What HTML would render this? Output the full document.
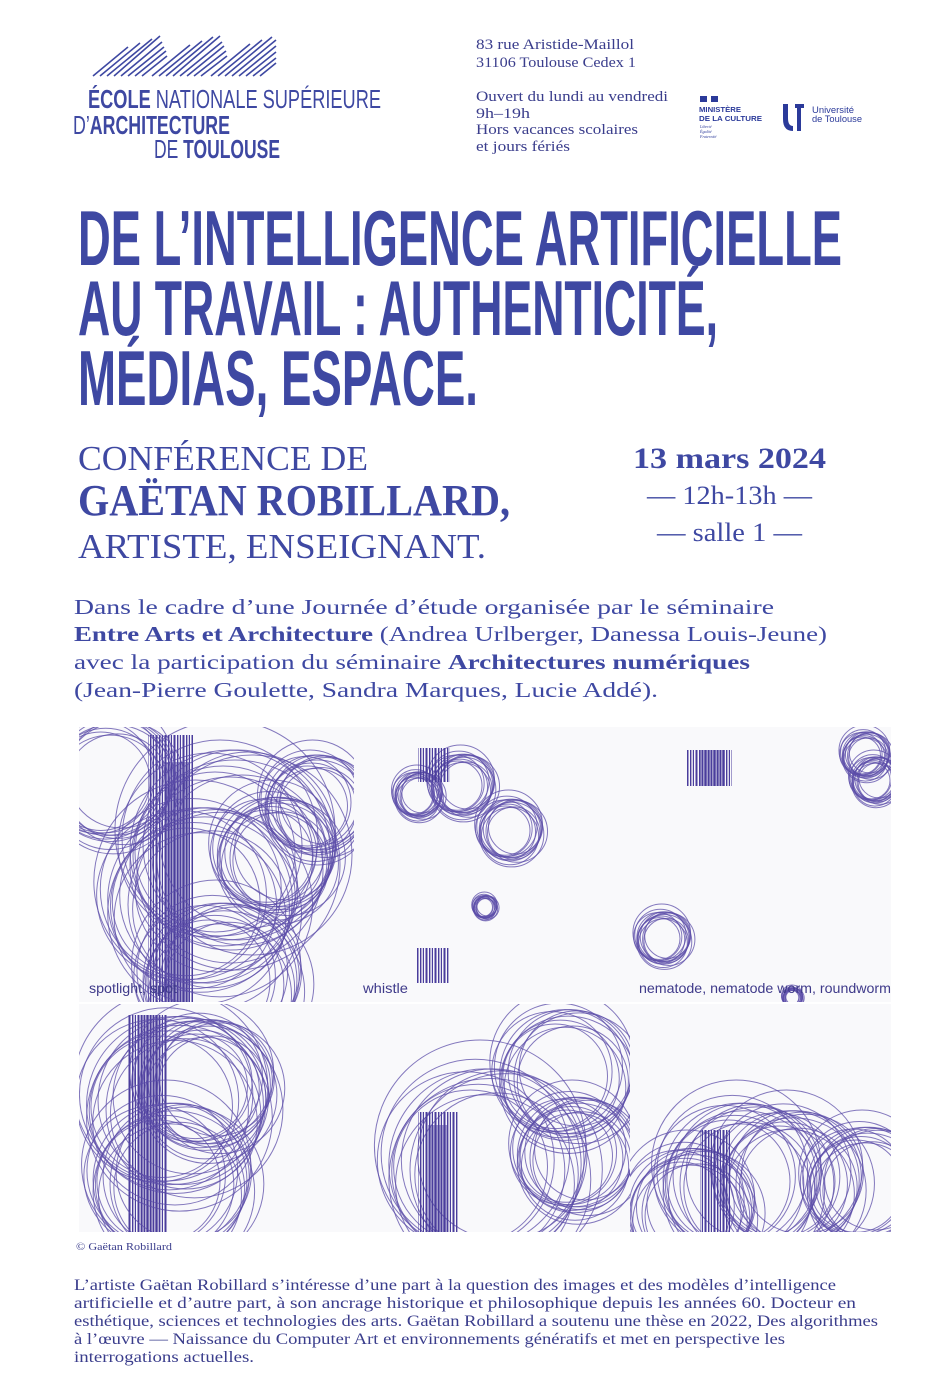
<!DOCTYPE html>
<html><head><meta charset="utf-8"><style>
html,body{margin:0;padding:0;background:#fff;}
svg{display:block}
.t{font-family:"Liberation Sans Narrow","Liberation Sans",sans-serif;font-weight:bold;fill:#3e48a2}
.s{font-family:"Liberation Serif",serif;fill:#3e48a2}
.b{font-family:"Liberation Serif",serif;fill:#3a3d8c}
.l{font-family:"Liberation Sans Narrow","Liberation Sans",sans-serif;fill:#3e48a2}
</style></head><body>
<svg width="933" height="1400" viewBox="0 0 933 1400" xmlns="http://www.w3.org/2000/svg">
<defs>
<symbol id="c" viewBox="-1.3 -1.3 2.6 2.6" overflow="visible">
<g fill="none" stroke="#5b4ca8" stroke-width="1" vector-effect="non-scaling-stroke" stroke-opacity=".75">
<circle cx="0" cy="0" r="1" vector-effect="non-scaling-stroke"/>
<circle cx=".08" cy="-.05" r=".95" vector-effect="non-scaling-stroke"/>
<circle cx="-.07" cy=".06" r=".9" vector-effect="non-scaling-stroke"/>
<circle cx=".12" cy=".1" r=".85" vector-effect="non-scaling-stroke"/>
<circle cx="-.1" cy="-.12" r=".98" vector-effect="non-scaling-stroke"/>
<circle cx=".05" cy=".15" r="1.05" vector-effect="non-scaling-stroke"/>
<circle cx="-.15" cy=".02" r=".8" vector-effect="non-scaling-stroke"/>
<circle cx=".18" cy="-.1" r=".88" vector-effect="non-scaling-stroke"/>
<circle cx="0" cy=".2" r=".93" vector-effect="non-scaling-stroke"/>
<circle cx="-.05" cy="-.2" r="1.1" vector-effect="non-scaling-stroke"/>
<circle cx=".22" cy=".05" r="1" vector-effect="non-scaling-stroke"/>
<circle cx="-.2" cy="-.05" r=".92" vector-effect="non-scaling-stroke"/>
</g>
</symbol>
<pattern id="bar" width="9" height="10" patternUnits="userSpaceOnUse">
<rect x="0" width="1" height="10" fill="#4a3d9c"/><rect x="2.5" width="2" height="10" fill="#4a3d9c"/><rect x="6" width="1" height="10" fill="#4a3d9c"/><rect x="7.6" width=".6" height="10" fill="#4a3d9c"/>
</pattern>
<clipPath id="img"><rect x="79" y="727" width="812" height="505"/></clipPath>
</defs>

<!-- logo hatch -->
<g stroke="#3e48a2" stroke-width="1.6">
<line x1="93" y1="76" x2="128" y2="47"/><line x1="100" y1="76" x2="140" y2="43"/><line x1="107" y1="76" x2="152" y2="39"/><line x1="114" y1="76" x2="160" y2="36"/><line x1="121" y1="76" x2="162" y2="42"/><line x1="128" y1="76" x2="164" y2="47"/><line x1="135" y1="76" x2="166" y2="51"/><line x1="142" y1="76" x2="167" y2="56"/>
<line x1="152" y1="76" x2="190" y2="45"/><line x1="159" y1="76" x2="202" y2="41"/><line x1="166" y1="76" x2="213" y2="37"/><line x1="173" y1="76" x2="220" y2="36"/><line x1="180" y1="76" x2="222" y2="42"/><line x1="187" y1="76" x2="224" y2="46"/><line x1="194" y1="76" x2="226" y2="51"/><line x1="201" y1="76" x2="227" y2="56"/>
<line x1="211" y1="76" x2="250" y2="44"/><line x1="218" y1="76" x2="262" y2="40"/><line x1="225" y1="76" x2="272" y2="37"/><line x1="232" y1="76" x2="276" y2="40"/><line x1="239" y1="76" x2="276" y2="46"/><line x1="246" y1="76" x2="276" y2="52"/><line x1="253" y1="76" x2="276" y2="58"/><line x1="260" y1="76" x2="276" y2="63"/>
</g>
<text class="l" x="88" y="108" font-size="26" textLength="293" lengthAdjust="spacingAndGlyphs"><tspan font-weight="bold">ÉCOLE</tspan> NATIONALE SUPÉRIEURE</text>
<text class="l" x="73" y="134" font-size="26" textLength="157" lengthAdjust="spacingAndGlyphs">D’<tspan font-weight="bold">ARCHITECTURE</tspan></text>
<text class="l" x="154" y="158" font-size="26" textLength="126" lengthAdjust="spacingAndGlyphs">DE <tspan font-weight="bold">TOULOUSE</tspan></text>

<!-- address -->
<g class="s" font-size="15" style="fill:#3a3d8c">
<text x="476" y="49" textLength="158" lengthAdjust="spacingAndGlyphs">83 rue Aristide-Maillol</text>
<text x="476" y="67" textLength="160" lengthAdjust="spacingAndGlyphs">31106 Toulouse Cedex 1</text>
<text x="476" y="101" textLength="192" lengthAdjust="spacingAndGlyphs">Ouvert du lundi au vendredi</text>
<text x="476" y="118" textLength="54" lengthAdjust="spacingAndGlyphs">9h–19h</text>
<text x="476" y="134" textLength="162" lengthAdjust="spacingAndGlyphs">Hors vacances scolaires</text>
<text x="476" y="151" textLength="94" lengthAdjust="spacingAndGlyphs">et jours fériés</text>
</g>
<!-- ministère -->
<rect x="700" y="96" width="7" height="6" fill="#2b3a9a"/><rect x="711" y="96" width="7" height="6" fill="#2b3a9a"/>
<text x="699" y="112" font-family="Liberation Sans" font-weight="bold" font-size="7.5" fill="#2b3a9a" textLength="42" lengthAdjust="spacingAndGlyphs">MINISTÈRE</text>
<text x="699" y="121" font-family="Liberation Sans" font-weight="bold" font-size="7.5" fill="#2b3a9a" textLength="63" lengthAdjust="spacingAndGlyphs">DE LA CULTURE</text>
<text x="700" y="128" font-family="Liberation Serif" font-style="italic" font-size="4" fill="#2b3a9a">Liberté</text>
<text x="700" y="133" font-family="Liberation Serif" font-style="italic" font-size="4" fill="#2b3a9a">Égalité</text>
<text x="700" y="138" font-family="Liberation Serif" font-style="italic" font-size="4" fill="#2b3a9a">Fraternité</text>
<!-- université -->
<path d="M783 104 h5 v14 q0 8 5 8 v5 q-10 0 -10 -12z" fill="#2b3a9a"/>
<path d="M795 104 h9 v4 h-3 v23 h-4 v-23 h-2z" fill="#2b3a9a"/>
<text x="812" y="113" font-family="Liberation Sans" font-size="9" fill="#2b3a9a" textLength="42" lengthAdjust="spacingAndGlyphs">Université</text>
<text x="812" y="122" font-family="Liberation Sans" font-size="9" fill="#2b3a9a" textLength="50" lengthAdjust="spacingAndGlyphs">de Toulouse</text>

<!-- title -->
<text class="t" x="78" y="265" font-size="78" textLength="764" lengthAdjust="spacingAndGlyphs">DE L’INTELLIGENCE ARTIFICIELLE</text>
<text class="t" x="78" y="335" font-size="78" textLength="640" lengthAdjust="spacingAndGlyphs">AU TRAVAIL : AUTHENTICITÉ,</text>
<text class="t" x="78" y="405" font-size="78" textLength="400" lengthAdjust="spacingAndGlyphs">MÉDIAS, ESPACE.</text>

<!-- subtitle -->
<text class="s" x="78" y="470" font-size="35" textLength="290" lengthAdjust="spacingAndGlyphs">CONFÉRENCE DE</text>
<text class="s" x="78" y="515" font-size="44" font-weight="bold" textLength="432" lengthAdjust="spacingAndGlyphs">GAËTAN ROBILLARD,</text>
<text class="s" x="78" y="558" font-size="35" textLength="408" lengthAdjust="spacingAndGlyphs">ARTISTE, ENSEIGNANT.</text>
<text class="s" x="633" y="468" font-size="30" font-weight="bold" textLength="193" lengthAdjust="spacingAndGlyphs">13 mars 2024</text>
<text class="s" x="647" y="504" font-size="26" textLength="165" lengthAdjust="spacingAndGlyphs">— 12h-13h —</text>
<text class="s" x="657" y="541" font-size="26" textLength="145" lengthAdjust="spacingAndGlyphs">— salle 1 —</text>

<!-- paragraph -->
<g class="s" font-size="21">
<text x="74" y="614" textLength="700" lengthAdjust="spacingAndGlyphs">Dans le cadre d’une Journée d’étude organisée par le séminaire</text>
<text x="74" y="641" textLength="753" lengthAdjust="spacingAndGlyphs"><tspan font-weight="bold">Entre Arts et Architecture</tspan> (Andrea Urlberger, Danessa Louis-Jeune)</text>
<text x="74" y="669" textLength="676" lengthAdjust="spacingAndGlyphs">avec la participation du séminaire <tspan font-weight="bold">Architectures numériques</tspan></text>
<text x="74" y="697" textLength="584" lengthAdjust="spacingAndGlyphs">(Jean-Pierre Goulette, Sandra Marques, Lucie Addé).</text>
</g>

<!-- image -->
<rect x="79" y="727" width="812" height="505" fill="#f9f9fb"/>
<g clip-path="url(#img)">
<clipPath id="p1"><rect x="79" y="727" width="275" height="275"/></clipPath>
<clipPath id="p2"><rect x="354" y="727" width="276" height="275"/></clipPath>
<clipPath id="p3"><rect x="630" y="727" width="261" height="275"/></clipPath>
<clipPath id="p4"><rect x="79" y="1003" width="551" height="229"/></clipPath>
<clipPath id="p5"><rect x="630" y="1003" width="261" height="229"/></clipPath>
<g clip-path="url(#p1)">
<rect x="148" y="735" width="45" height="267" fill="url(#bar)"/>
<rect x="165" y="762" width="25" height="240" fill="#4a3d9c" opacity=".5"/>
<use href="#c" x="100" y="720" width="260" height="260"/>
<use href="#c" x="200" y="780" width="150" height="150"/>
<use href="#c" x="250" y="740" width="130" height="130"/>
<use href="#c" x="80" y="780" width="240" height="240"/>
<use href="#c" x="120" y="880" width="200" height="200"/>
<use href="#c" x="30" y="700" width="160" height="160"/>
</g>
<g clip-path="url(#p2)">
<use href="#c" x="388" y="765" width="60" height="60"/>
<use href="#c" x="422" y="745" width="80" height="80"/>
<use href="#c" x="470" y="790" width="80" height="80"/>
<use href="#c" x="470" y="892" width="30" height="30"/>
<rect x="418" y="748" width="32" height="34" fill="url(#bar)"/>
<rect x="417" y="948" width="32" height="35" fill="url(#bar)"/>
</g>
<g clip-path="url(#p3)">
<rect x="687" y="750" width="45" height="36" fill="url(#bar)"/>
<rect x="700" y="750" width="25" height="36" fill="#4a3d9c" opacity=".5"/>
<use href="#c" x="629" y="900" width="68" height="76"/>
<use href="#c" x="833" y="725" width="65" height="60"/>
<use href="#c" x="845" y="750" width="60" height="60"/>
<use href="#c" x="780" y="985" width="25" height="25"/>
</g>
<g clip-path="url(#p4)">
<rect x="128" y="1015" width="40" height="217" fill="url(#bar)"/>
<rect x="140" y="1015" width="20" height="217" fill="#4a3d9c" opacity=".4"/>
<use href="#c" x="60" y="990" width="230" height="230"/>
<use href="#c" x="70" y="1080" width="200" height="200"/>
<use href="#c" x="120" y="1000" width="170" height="170"/>
<use href="#c" x="360" y="1040" width="250" height="250"/>
<use href="#c" x="480" y="990" width="170" height="170"/>
<use href="#c" x="500" y="1080" width="150" height="150"/>
<rect x="418" y="1112" width="40" height="120" fill="url(#bar)"/>
<rect x="428" y="1125" width="20" height="107" fill="#4a3d9c" opacity=".5"/>
</g>
<g clip-path="url(#p5)">
<use href="#c" x="640" y="1080" width="200" height="200"/>
<use href="#c" x="610" y="1130" width="160" height="160"/>
<use href="#c" x="790" y="1110" width="150" height="150"/>
<use href="#c" x="700" y="1090" width="180" height="180"/>
<rect x="700" y="1130" width="30" height="102" fill="url(#bar)"/>
</g>
<rect x="79" y="1002" width="812" height="2" fill="#fff"/>
<g font-family="Liberation Sans Narrow, Liberation Sans, sans-serif" font-size="14" fill="#3f3a8a">
<text x="89" y="993" textLength="88" lengthAdjust="spacingAndGlyphs">spotlight, spot</text>
<text x="363" y="993" textLength="45" lengthAdjust="spacingAndGlyphs">whistle</text>
<text x="639" y="993" textLength="252" lengthAdjust="spacingAndGlyphs">nematode, nematode worm, roundworm</text>
</g>
</g>
<text x="76" y="1250" font-family="Liberation Serif" font-size="10.5" fill="#3a3d8c" textLength="96" lengthAdjust="spacingAndGlyphs">© Gaëtan Robillard</text>

<!-- bottom paragraph -->
<g class="b" font-size="15.5">
<text x="74" y="1290" textLength="762" lengthAdjust="spacingAndGlyphs">L’artiste Gaëtan Robillard s’intéresse d’une part à la question des images et des modèles d’intelligence</text>
<text x="74" y="1308" textLength="782" lengthAdjust="spacingAndGlyphs">artificielle et d’autre part, à son ancrage historique et philosophique depuis les années 60. Docteur en</text>
<text x="74" y="1326" textLength="804" lengthAdjust="spacingAndGlyphs">esthétique, sciences et technologies des arts. Gaëtan Robillard a soutenu une thèse en 2022, Des algorithmes</text>
<text x="74" y="1344" textLength="711" lengthAdjust="spacingAndGlyphs">à l’œuvre — Naissance du Computer Art et environnements génératifs et met en perspective les</text>
<text x="74" y="1362" textLength="180" lengthAdjust="spacingAndGlyphs">interrogations actuelles.</text>
</g>
</svg>
</body></html>
